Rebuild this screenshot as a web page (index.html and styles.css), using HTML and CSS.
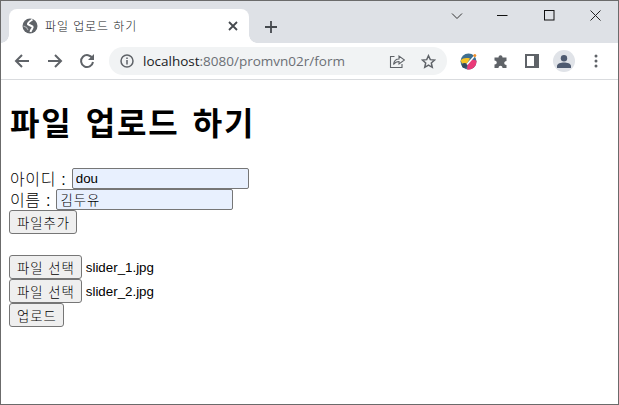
FILE: index.html
```html
<!DOCTYPE html>
<html lang="ko">
<head>
<meta charset="utf-8">
<title>파일 업로드 하기</title>
<link rel="stylesheet" href="styles.css">
</head>
<body>
<div class="window">
  <div class="tabstrip">
    <div class="tab">
      <svg class="favicon" width="16" height="16" viewBox="0 0 16 16"><circle cx="8" cy="8" r="7.500" fill="#5f6368"/><path d="M10.500 1.500C8 3 5.500 4.500 6 6.200L10.500 8.500C11.500 10 9 11 8.500 14" fill="none" stroke="#fff" stroke-width="2"/><path d="M1.500 8 4.500 9.500 6 12" fill="none" stroke="#fff" stroke-width="1.200" opacity=".5"/></svg>
      <span class="tab-title">파일 업로드 하기</span>
      <svg class="tab-close" width="10" height="10" viewBox="0 0 10 10"><path d="M1 1 9 9M9 1 1 9" stroke="#45494e" stroke-width="1.800"/></svg>
    </div>
    <svg class="newtab" width="14" height="14" viewBox="0 0 14 14"><path d="M7 1V13M1 7H13" stroke="#45494e" stroke-width="1.800"/></svg>
    <div class="wincontrols">
      <svg width="12" height="8" viewBox="0 0 12 8"><path d="M1 1.500 6 6.500 11 1.500" fill="none" stroke="#333" stroke-width="1"/></svg>
      <svg class="w-min" width="11" height="11" viewBox="0 0 11 11"><path d="M0 5.500H10.500" stroke="#111" stroke-width="1"/></svg>
      <svg class="w-max" width="11" height="11" viewBox="0 0 11 11"><rect x=".5" y=".5" width="9.500" height="9.500" fill="none" stroke="#111"/></svg>
      <svg class="w-close" width="11" height="11" viewBox="0 0 11 11"><path d="M.5 .5 10.500 10.500M10.500 .5 .5 10.500" stroke="#222" stroke-width="1"/></svg>
    </div>
  </div>
  <div class="toolbar">
    <svg class="nav nav-back" width="16" height="16" viewBox="0 0 16 16"><path d="M15 8H2M8 2 2 8 8 14" fill="none" stroke="#5f6368" stroke-width="2"/></svg>
    <svg class="nav" width="16" height="16" viewBox="0 0 16 16"><path d="M1 8H14M8 2 14 8 8 14" fill="none" stroke="#5f6368" stroke-width="2"/></svg>
    <svg class="nav" width="16" height="16" viewBox="0 0 16 16"><path d="M13.500 5.500A6 6 0 1 0 14 9" fill="none" stroke="#5f6368" stroke-width="2"/><path d="M15 1V7H9Z" fill="#5f6368"/></svg>
    <div class="omnibox">
      <svg width="14" height="14" viewBox="0 0 14 14"><circle cx="7" cy="7" r="6" fill="none" stroke="#5f6368" stroke-width="1.500"/><path d="M7 6V10.500M7 3.500V5" stroke="#5f6368" stroke-width="1.500"/></svg>
      <span class="url"><span class="host">localhost</span>:8080/promvn02r/form</span>
      <svg class="omni-share" width="16" height="16" viewBox="0 0 16 16"><path d="M5.500 3.500H1.500V14.500H13V11" fill="none" stroke="#5f6368" stroke-width="1.100"/><path d="M4.500 11.500C5 8 7.500 6 10 6V3L15.500 7 10 11V8.500C8 8.500 6 9.500 4.500 11.500Z" fill="none" stroke="#5f6368" stroke-width="1.100"/></svg>
      <svg class="omni-star" width="15" height="15" viewBox="0 0 16 16"><path d="M8 1.800 9.900 6 14.500 6.500 11 9.600 12 14.200 8 11.900 4 14.200 5 9.600 1.500 6.500 6.100 6Z" fill="none" stroke="#5f6368" stroke-width="1.600"/></svg>
    </div>
    <div class="actions">
      <svg width="17" height="17" viewBox="0 0 17 17"><circle cx="8.500" cy="8.500" r="8" fill="#3f6f8f"/><path d="M.6 7.500C3 5 6 4.500 10 5.500L7 10.500 2 10.500Z" fill="#f7c325"/><path d="M16.400 7.500A8 8 0 0 1 7 16.400L7.500 12 11.500 6.500Z" fill="#ea3a78"/><circle cx="4.500" cy="12.500" r="2.500" fill="#34495e"/><path d="M7 11.500 14.500 3" stroke="#fff" stroke-width="1.500"/><circle cx="14.800" cy="2.500" r="1.500" fill="#ef8f2a"/></svg>
      <svg width="15" height="15" viewBox="0 0 15 15"><path d="M1 4H5C5 1 9 1 9 4H13V7.500C10 7.500 10 11.500 13 11.500V14.500H9C9 11.500 5 11.500 5 14.500H1V11C4 11 4 7 1 7Z" fill="#5f6368" transform="translate(.5 -.5)"/></svg>
      <svg width="14" height="14" viewBox="0 0 14 14"><path d="M0 0H14V14H0ZM2 2V12H9V2Z" fill="#5f6368" fill-rule="evenodd"/></svg>
      <div class="avatar"><svg width="14" height="13" viewBox="0 0 14 13"><circle cx="7" cy="3.200" r="3.200" fill="#4e5a70"/><path d="M0 13V11C0 8.500 4 7.500 7 7.500S14 8.500 14 11V13Z" fill="#4e5a70"/></svg></div>
      <svg class="kebab" width="4" height="14" viewBox="0 0 4 14"><circle cx="2" cy="2" r="1.500" fill="#5f6368"/><circle cx="2" cy="7" r="1.500" fill="#5f6368"/><circle cx="2" cy="12" r="1.500" fill="#5f6368"/></svg>
    </div>
  </div>
  <main class="page">
    <h1 class="title">파일 업로드 하기</h1>
    <form class="upload-form">
      <div class="row row-field"><label for="uid">아이디 <span class="colon">:</span> </label><input id="uid" class="field" type="text" value="dou"></div>
      <div class="row row-field"><label for="uname">이름 <span class="colon">:</span> </label><input id="uname" class="field field-ko" type="text" value="김두유"></div>
      <div class="row"><button class="btn" type="button">파일추가</button></div>
      <div class="files">
        <div class="file-row"><button class="btn" type="button">파일 선택</button><span class="file-name">slider_1.jpg</span></div>
        <div class="file-row"><button class="btn" type="button">파일 선택</button><span class="file-name">slider_2.jpg</span></div>
        <div class="row"><button class="btn" type="button">업로드</button></div>
      </div>
    </form>
  </main>
</div>
</body>
</html>
```
FILE: styles.css
```css
* { box-sizing: border-box; }
html, body { margin: 0; padding: 0; height: 100%; background: #fff; }
body { font-family: "Noto Sans CJK KR", "Liberation Sans", sans-serif; color: #000; }
.window { width: 619px; height: 405px; border: 1px solid #6b6b6b; display: flex; flex-direction: column; overflow: hidden; }
.tabstrip { height: 42px; background: #dee1e6; display: flex; align-items: flex-end; padding-left: 8px; flex: none; }
.tab { position: relative; width: 240px; height: 34px; background: #fff; border-radius: 8px 8px 0 0; display: flex; align-items: center; padding: 0 0 0 13px; }
.tab::before, .tab::after { content: ""; position: absolute; bottom: 0; width: 8px; height: 8px; }
.tab::before { left: -8px; background: radial-gradient(circle at 0 0, #dee1e6 7.500px, #fff 8px); }
.tab::after { right: -8px; background: radial-gradient(circle at 100% 0, #dee1e6 7.500px, #fff 8px); }
.favicon { flex: none; }
.tab-title { font-size: 12px; line-height: 16px; margin-left: 7px; color: #202124; flex: 1; white-space: nowrap; font-weight: 300; letter-spacing: .9px; }
.tab-close { flex: none; margin-right: 11px; }
.newtab { flex: none; margin: 0 0 9px 15px; }
.wincontrols { margin-left: auto; align-self: flex-start; display: flex; align-items: center; padding: 9px 17px 0 0; }
.w-min { margin-left: 34px; }
.w-max { margin-left: 36px; }
.w-close { margin-left: 35px; }
.toolbar { height: 37px; flex: none; background: #fff; border-bottom: 1px solid #d9dbde; display: flex; align-items: center; padding: 0 0 0 13px; gap: 16px; }
.nav { flex: none; }
.nav-back { margin-right: 1px; }
.omnibox { width: 338px; height: 28px; margin-left: -2px; background: #f1f3f4; border-radius: 14px; display: flex; align-items: center; padding: 0 11px 0 11px; }
.url { font-family: "Open Sans", "Liberation Sans", sans-serif; font-size: 13.500px; color: #6b6f74; margin-left: 9px; flex: 1; white-space: nowrap; }
.host { color: #202124; }
.omni-share { margin-right: 16px; }
.actions { flex: none; display: flex; align-items: center; margin-left: -3px; }
.actions > svg:nth-child(2) { margin-left: 16px; }
.actions > svg:nth-child(3) { margin-left: 17px; }
.avatar { width: 22px; height: 22px; margin-left: 14px; border-radius: 50%; background: #e0e3e8; display: flex; align-items: center; justify-content: center; }
.kebab { margin-left: 19px; }
.page { flex: 1; padding: 20px 8px 0 8px; }
.title { margin: 0 0 25px; font-size: 32px; font-weight: 700; line-height: 43px; letter-spacing: 1.800px; word-spacing: 2.500px; padding-left: 1px; }
.row { display: flex; align-items: center; font-size: 16px; line-height: 21px; }
.row-field { height: 21px; }
.row label { white-space: pre; font-weight: 300; letter-spacing: .6px; word-spacing: .3px; padding-left: 1px; }
.colon { font-family: "Liberation Sans", sans-serif; font-weight: 400; }
.field { width: 177px; height: 21px; padding: 1px 3px; border: 1px solid #767676; border-radius: 2px; background: #e8f0fe; font: 13.333px "Liberation Sans", "Noto Sans CJK KR", sans-serif; color: #000; }
.field-ko { letter-spacing: 1px; font-weight: 300; }
.btn { height: 24px; padding: 0 6px 0 7px; border: 1px solid #767676; border-radius: 3px; background: #efefef; color: #000; font: 300 13.333px "Noto Sans CJK KR", "Liberation Sans", sans-serif; letter-spacing: 1px; line-height: 19px; }
.files { margin-top: 21px; }
.file-row { display: flex; align-items: center; height: 24px; }
.file-name { margin-left: 4px; padding-top: 1px; font: 13.333px "Liberation Sans", sans-serif; }
```
